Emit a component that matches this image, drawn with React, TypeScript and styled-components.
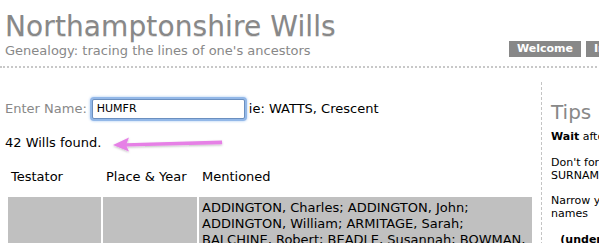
import React from "react";
import styled, { createGlobalStyle } from "styled-components";

const GlobalStyle = createGlobalStyle`
  html, body {
    margin: 0;
    padding: 0;
    background: #fff;
    overflow: hidden;
  }
  body {
    font-family: "DejaVu Sans", Verdana, sans-serif;
    color: #000;
  }
`;

const Page = styled.div`
  width: 780px;
`;

const Header = styled.header`
  display: grid;
  grid-template-columns: 504px 1fr;
  align-items: end;
  padding: 11px 0 7px 5px;
  border-bottom: 2px dotted #c8c8c8;
`;

const Title = styled.h1`
  margin: 0;
  font-size: 28px;
  font-weight: normal;
  line-height: 32px;
  letter-spacing: 0.1px;
  color: #888;
  text-shadow: 0 1px 0 #ddd;
`;

const Tagline = styled.p`
  margin: 0;
  font-size: 13px;
  line-height: 16px;
  color: #888;
`;

const Nav = styled.nav`
  display: flex;
  gap: 5px;
  padding-bottom: 2px;
`;

const NavButton = styled.a`
  display: block;
  background: #888;
  color: #fff;
  font-size: 11px;
  font-weight: bold;
  line-height: 16px;
  padding: 0 8px;
  white-space: nowrap;
`;

const Body = styled.div`
  display: flex;
  align-items: stretch;
`;

const Main = styled.main`
  width: 531px;
  padding: 28px 0 0 5px;
  margin-right: 5px;
`;

const SearchRow = styled.div`
  display: flex;
  align-items: center;
  font-size: 13px;
  height: 25px;
`;

const Label = styled.span`
  color: #888;
  margin-right: 5px;
`;

const NameInput = styled.input`
  box-sizing: border-box;
  width: 153px;
  height: 20px;
  margin: 0 4px 0 0;
  padding: 0 4px;
  border: 1px solid #6b8fbf;
  border-radius: 2px;
  box-shadow: 0 0 0 2px rgba(124, 168, 226, 0.75), 0 0 2px 3px rgba(150, 190, 240, 0.4);
  font-family: "DejaVu Sans", sans-serif;
  font-size: 11px;
  color: #000;
  outline: none;
`;

const ResultRow = styled.div`
  display: flex;
  align-items: center;
  gap: 10px;
  margin-top: 13px;
  font-size: 13px;
  height: 16px;
`;

const Arrow = () => (
  <svg width="114" height="20" viewBox="0 0 114 20" style={{ marginTop: 4 }}>
    <defs>
      <filter id="sh" x="-10%" y="-50%" width="120%" height="200%">
        <feDropShadow dx="0" dy="1" stdDeviation="0.8" floodColor="#000" floodOpacity="0.25" />
      </filter>
    </defs>
    <g filter="url(#sh)">
      <path d="M14 9.2 L111 6.4 L111.2 10.2 L14 12.4 Z" fill="#e680e6" />
      <path d="M2 11 L18 3.5 L15 11 L18 17.5 Z" fill="#e680e6" />
    </g>
  </svg>
);

const Results = styled.table`
  margin-top: 11px;
  margin-left: 1px;
  border-spacing: 2px;
  table-layout: fixed;
  width: 528px;
  font-size: 13px;
`;

const HeadCell = styled.th<{ $w?: number }>`
  text-align: left;
  font-weight: normal;
  padding: 6px 3px 11px;
  white-space: nowrap;
  width: ${(p) => (p.$w ? `${p.$w}px` : "auto")};
`;

const Cell = styled.td`
  background: #c0c0c0;
  vertical-align: middle;
  padding: 3px 3px;
  line-height: 16px;
`;

const Sidebar = styled.aside`
  flex: 1;
  margin-top: 14px;
  padding: 18px 0 0 9px;
  border-left: 1px dashed #c4c4c4;
  font-size: 11px;
  line-height: 13px;
  min-height: 200px;
`;

const SideTitle = styled.h2`
  margin: 0 0 6px;
  font-size: 20px;
  font-weight: normal;
  line-height: 24px;
  color: #888;
`;

const Tip = styled.p`
  margin: 0 0 12.5px;
  width: 225px;
`;

const rows = [
  {
    testator: "",
    place: "",
    mentioned:
      "ADDINGTON, Charles; ADDINGTON, John; ADDINGTON, William; ARMITAGE, Sarah; BALCHINE, Robert; BEADLE, Susannah; BOWMAN, Thomas; HUMFREY, Anne; HUMFREY, Elizabeth",
  },
];

export default function App() {
  return (
    <>
      <GlobalStyle />
      <Page>
        <Header>
          <div>
            <Title>Northamptonshire Wills</Title>
            <Tagline>Genealogy: tracing the lines of one's ancestors</Tagline>
          </div>
          <Nav>
            <NavButton>Welcome</NavButton>
            <NavButton>Introduction</NavButton>
          </Nav>
        </Header>
        <Body>
          <Main>
            <SearchRow>
              <Label>Enter Name:</Label>
              <NameInput defaultValue="HUMFR" />
              <span>ie: WATTS, Crescent</span>
            </SearchRow>
            <ResultRow>
              <span>42 Wills found.</span>
              <Arrow />
            </ResultRow>
            <Results>
              <thead>
                <tr>
                  <HeadCell $w={87}>Testator</HeadCell>
                  <HeadCell $w={88}>Place &amp; Year</HeadCell>
                  <HeadCell>Mentioned</HeadCell>
                </tr>
              </thead>
              <tbody>
                {rows.map((r, i) => (
                  <tr key={i}>
                    <Cell>{r.testator}</Cell>
                    <Cell>{r.place}</Cell>
                    <Cell>{r.mentioned}</Cell>
                  </tr>
                ))}
              </tbody>
            </Results>
          </Main>
          <Sidebar>
            <SideTitle>Tips</SideTitle>
            <Tip>
              <b>Wait</b> after typing a name.
            </Tip>
            <Tip>Don't forget to enter the name as SURNAME, Forename.</Tip>
            <Tip>Narrow your search by typing fuller names</Tip>
            <Tip>
              <b>_ (underscore)</b> matches any letter
            </Tip>
          </Sidebar>
        </Body>
      </Page>
    </>
  );
}
